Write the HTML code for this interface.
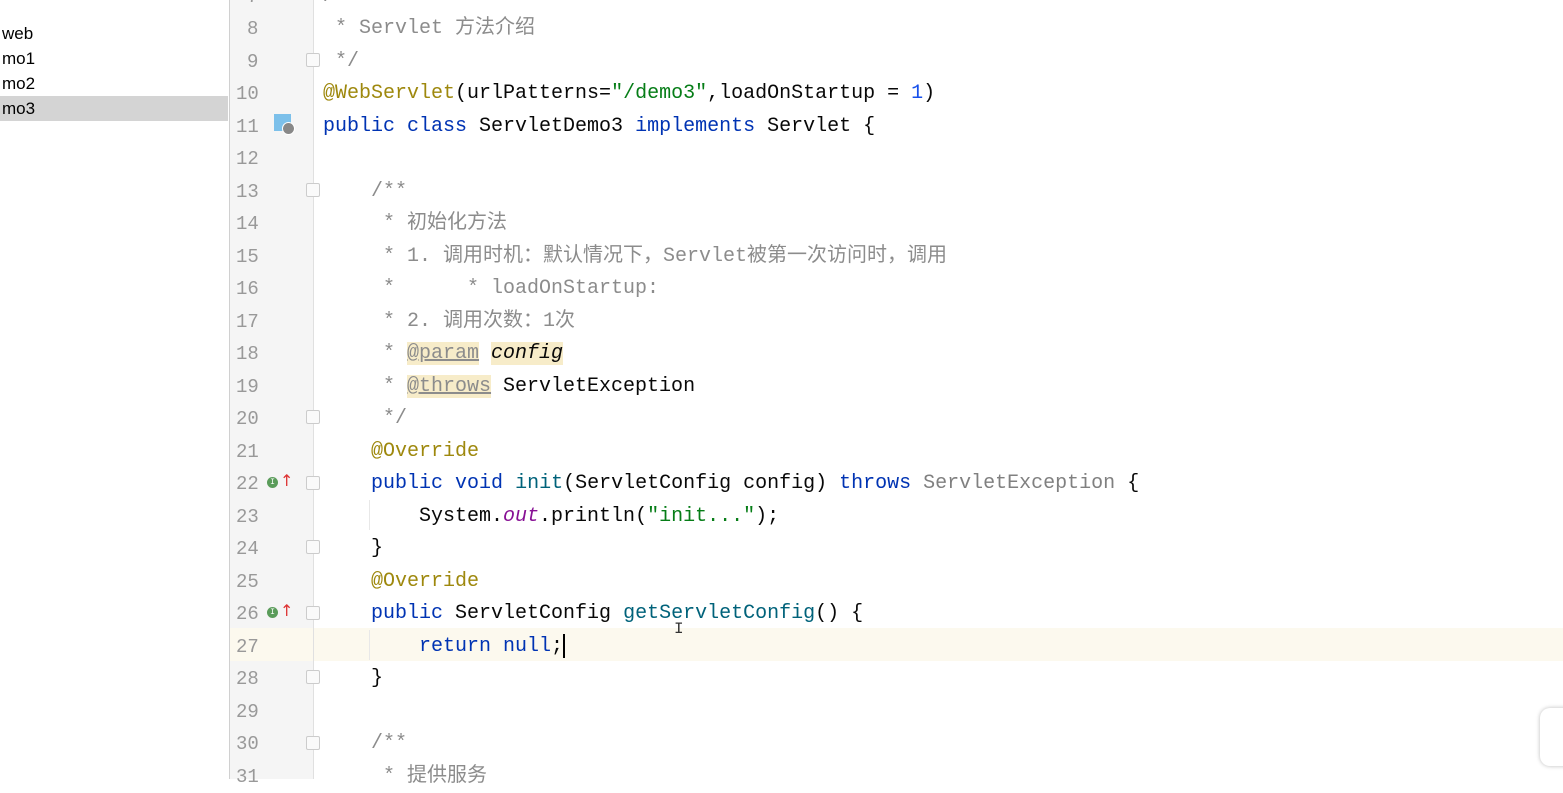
<!DOCTYPE html>
<html><head><meta charset="utf-8"><style>
body{margin:0;width:1563px;height:779px;overflow:hidden;background:#fff;position:relative;font-family:"Liberation Mono","Noto Sans CJK SC",monospace;}
.side{position:absolute;left:0;top:0;width:229px;height:779px;background:#fff;border-right:1px solid #d0d0d0;font-family:"Liberation Sans","Noto Sans CJK SC",sans-serif;font-size:17px;color:#000}
.side div{position:absolute;left:0;padding-left:2px;height:25px;line-height:25px;width:226px}
.gut{position:absolute;left:230px;top:0;width:84px;height:779px;background:#f5f5f5}
.gl{position:absolute;left:313px;top:0;width:1px;height:779px;background:#e0e0e0}
.cur{position:absolute;left:230px;top:628px;width:1333px;height:33px;background:#fcf9ee}
.ln{position:absolute;left:236px;width:30px;font-size:19px;color:#999;line-height:32px;margin-top:2px}
.c{position:absolute;left:323px;font-size:20px;line-height:32px;white-space:pre;color:#080808;margin-top:2px}
.k{color:#0033b3}.a{color:#9e880d}.s{color:#067d17}.cm{color:#8c8c8c}.n{color:#1750eb}.m{color:#00627a}.f{color:#871094;font-style:italic}
.tag{color:#8c8c8c;text-decoration:underline;background:#f7ecc9}
.fold{position:absolute;left:306px;width:12px;height:12px;border:1px solid #ccc;background:#fafafa;border-radius:2px}
.ic{position:absolute;left:267px;width:11px;height:11px;border-radius:50%;background:#5a9c5a;color:#fff;font-size:8px;line-height:11px;text-align:center}
.ar{position:absolute;left:280px;color:#d33;font-size:16px;font-family:"DejaVu Sans",sans-serif}
.guide{position:absolute;left:369px;width:1px;background:#e8e8e8}
</style></head><body>
<div class="side">
<div style="top:21px">web</div>
<div style="top:46px">mo1</div>
<div style="top:71px">mo2</div>
<div style="top:96px;background:#d4d4d4">mo3</div>
</div>
<div class="gut"></div>
<div class="cur"></div>
<div class="gl"></div>
<div class="guide" style="top:500px;height:30px"></div>
<div class="guide" style="top:630px;height:30px"></div>
<div class="ln" style="top:-21px;left:247px">7</div>
<div class="ln" style="top:11px;left:247px">8</div>
<div class="ln" style="top:44px;left:247px">9</div>
<div class="ln" style="top:76px">10</div>
<div class="ln" style="top:109px">11</div>
<div class="ln" style="top:141px">12</div>
<div class="ln" style="top:174px">13</div>
<div class="ln" style="top:206px">14</div>
<div class="ln" style="top:239px">15</div>
<div class="ln" style="top:271px">16</div>
<div class="ln" style="top:304px">17</div>
<div class="ln" style="top:336px">18</div>
<div class="ln" style="top:369px">19</div>
<div class="ln" style="top:401px">20</div>
<div class="ln" style="top:434px">21</div>
<div class="ln" style="top:466px">22</div>
<div class="ln" style="top:499px">23</div>
<div class="ln" style="top:531px">24</div>
<div class="ln" style="top:564px">25</div>
<div class="ln" style="top:596px">26</div>
<div class="ln" style="top:629px">27</div>
<div class="ln" style="top:661px">28</div>
<div class="ln" style="top:694px">29</div>
<div class="ln" style="top:726px">30</div>
<div class="ln" style="top:759px">31</div>
<div style="position:absolute;left:274px;top:114px;width:17px;height:17px;background:#7cc0ea"></div>
<div style="position:absolute;left:282px;top:122px;width:11px;height:11px;border-radius:50%;background:#888;border:1px solid #fff"></div>
<div class="ic" style="top:477px">I</div><div class="ar" style="top:471px">↑</div>
<div class="ic" style="top:607px">I</div><div class="ar" style="top:601px">↑</div>
<div class="fold" style="top:53px"></div>
<div class="fold" style="top:183px"></div>
<div class="fold" style="top:410px"></div>
<div class="fold" style="top:476px"></div>
<div class="fold" style="top:540px"></div>
<div class="fold" style="top:606px"></div>
<div class="fold" style="top:670px"></div>
<div class="fold" style="top:736px"></div>
<div class="c cm" style="top:-21px">/**</div>
<div class="c cm" style="top:11px"> * Servlet 方法介绍</div>
<div class="c cm" style="top:44px"> */</div>
<div class="c" style="top:76px"><span class="a">@WebServlet</span>(urlPatterns=<span class="s">"/demo3"</span>,loadOnStartup = <span class="n">1</span>)</div>
<div class="c" style="top:109px"><span class="k">public class</span> ServletDemo3 <span class="k">implements</span> Servlet {</div>
<div class="c cm" style="top:174px">    /**</div>
<div class="c cm" style="top:206px">     * 初始化方法</div>
<div class="c cm" style="top:239px">     * 1. 调用时机：默认情况下，Servlet被第一次访问时，调用</div>
<div class="c cm" style="top:271px">     *      * loadOnStartup:</div>
<div class="c cm" style="top:304px">     * 2. 调用次数：1次</div>
<div class="c" style="top:336px"><span class="cm">     * </span><span class="tag">@param</span><span class="cm"> </span><span style="background:#f7ecc9;font-style:italic">config</span></div>
<div class="c" style="top:369px"><span class="cm">     * </span><span class="tag">@throws</span> ServletException</div>
<div class="c cm" style="top:401px">     */</div>
<div class="c a" style="top:434px">    @Override</div>
<div class="c" style="top:466px">    <span class="k">public void</span> <span class="m">init</span>(ServletConfig config) <span class="k">throws</span> <span style="color:#808080">ServletException</span> {</div>
<div class="c" style="top:499px">        System.<span class="f">out</span>.println(<span class="s">"init..."</span>);</div>
<div class="c" style="top:531px">    }</div>
<div class="c a" style="top:564px">    @Override</div>
<div class="c" style="top:596px">    <span class="k">public</span> ServletConfig <span class="m">getServletConfig</span>() {</div>
<div class="c" style="top:629px">        <span class="k">return null</span>;<span style="display:inline-block;width:2px;height:24px;background:#000;vertical-align:middle"></span></div>
<div class="c" style="top:661px">    }</div>
<div class="c cm" style="top:726px">    /**</div>
<div class="c cm" style="top:759px">     * 提供服务</div>
<div style="position:absolute;left:674px;top:620px;font-size:16px;color:#333">I</div>
<div style="position:absolute;left:1540px;top:708px;width:40px;height:58px;border-radius:10px;background:#fff;box-shadow:0 0 4px #bbb"></div>
</body></html>
